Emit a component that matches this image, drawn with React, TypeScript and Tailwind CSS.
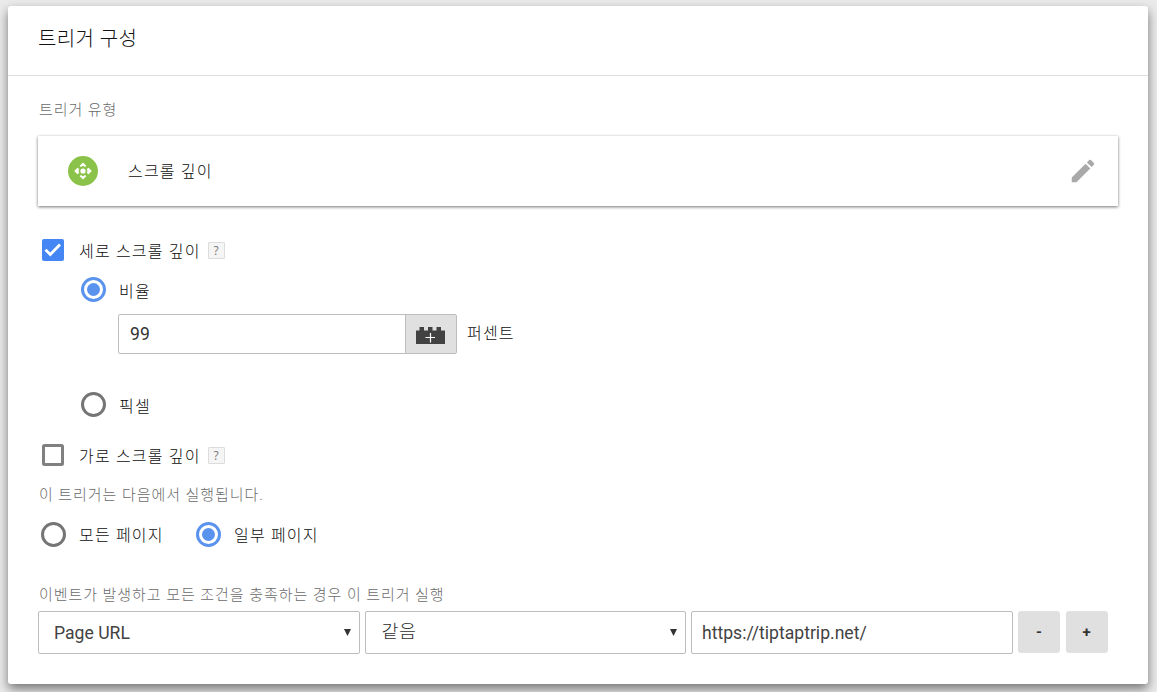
import type { ReactNode } from 'react'

interface LabelProps {
  children: ReactNode
  className?: string
}

function Caption({ children, className = '' }: LabelProps) {
  return (
    <div className={`flex h-8 items-center pt-px pl-px text-[15px] tracking-[0.95px] text-[#6b6b6b] ${className}`}>
      {children}
    </div>
  )
}

function OptionText({ children, className = '' }: LabelProps) {
  return (
    <span className={`text-[16px] tracking-[1.2px] whitespace-nowrap text-[#0c0c0c] ${className}`}>
      {children}
    </span>
  )
}

function Checkbox({ checked = false }: { checked?: boolean }) {
  return (
    <svg className="h-[22px] w-[22px] shrink-0" viewBox="0 0 22 22">
      {checked ? (
        <>
          <rect width="22" height="22" rx="2" fill="#4486f4" />
          <path d="M3.5 10.8l4.8 4.7L18 5.5" fill="none" stroke="#fff" strokeWidth="2.8" />
        </>
      ) : (
        <rect x="1.5" y="1.5" width="19" height="19" rx="1" fill="#fff" stroke="#808080" strokeWidth="3" />
      )}
    </svg>
  )
}

function Radio({ checked = false }: { checked?: boolean }) {
  return (
    <svg className="mb-px h-[25px] w-[25px] shrink-0" viewBox="0 0 25 25">
      <circle cx="12.5" cy="12.5" r="11" fill="#fff" stroke={checked ? '#5a93ee' : '#757575'} strokeWidth="3" />
      {checked && <circle cx="12.5" cy="12.5" r="6.5" fill="#5a93ee" />}
    </svg>
  )
}

function Help() {
  return (
    <span className="mt-px ml-[7px] flex h-[17px] w-[17px] items-center justify-center rounded-[1px] border border-[#dcdcdc] bg-[#f5f5f5] font-['Open_Sans',sans-serif] text-[12px] leading-none font-normal text-[#777]">
      ?
    </span>
  )
}

function ScrollIcon() {
  return (
    <svg className="h-[30px] w-[30px]" viewBox="0 0 30 30">
      <circle cx="15" cy="15" r="15" fill="#8bc34a" />
      <g fill="#fff">
        <circle cx="15" cy="15" r="2.6" />
        <path d="M15 6.5l3.3 3.2-1.2 1.2-2.1-1.100-2.100 1.100-1.200-1.200z" />
        <path d="M15 23.500l3.300-3.200-1.200-1.200-2.100 1.100-2.100-1.100-1.200 1.200z" />
        <path d="M6.200 15l3.200-3.300 1.800 1.200-.7 2.100.7 2.100-1.800 1.200z" />
        <path d="M23.800 15l-3.200-3.300-1.800 1.200.7 2.100-.7 2.100 1.800 1.200z" />
      </g>
    </svg>
  )
}

function PencilIcon() {
  return (
    <svg className="h-[30px] w-[30px]" viewBox="0 0 24 24" fill="#a9a9a9">
      <path d="M3 17.25V21h3.75L17.81 9.94l-3.75-3.75L3 17.25zM20.71 7.04a1 1 0 0 0 0-1.41l-2.34-2.34a1 1 0 0 0-1.41 0l-1.83 1.83 3.75 3.75 1.83-1.83z" />
    </svg>
  )
}

function BrickIcon() {
  return (
    <svg className="h-[17px] w-[29px]" viewBox="0 0 29 17">
      <path d="M0 17V3.5h3.500V0H8v3.500h4V0h4.500v3.500h4V0H25v3.500h4V17z" fill="#424242" />
      <path d="M9.500 10.500h9.500M14.500 6v9.500" stroke="#fff" strokeWidth="1.2" />
    </svg>
  )
}

function Select({ children }: LabelProps) {
  return (
    <button className="flex h-[43px] w-[321.500px] items-center justify-between rounded-[2px] border border-[#bdbdbd] bg-white pr-[8px] pl-[15px] text-[17.6px] text-[#424242]">
      {children}
      <svg className="h-[7px] w-[7px]" viewBox="0 0 7 7">
        <path d="M0 0h7L3.500 7z" fill="#333" />
      </svg>
    </button>
  )
}

export default function App() {
  return (
    <div className="h-[692px] w-[1157px] overflow-hidden bg-[#ebebeb] px-2 pt-1.5 font-[Roboto,'Noto_Sans_CJK_KR',sans-serif] font-light">
      <div className="h-[678px] w-[1140px] rounded-[3px] bg-white shadow-[0_5px_11px_rgba(0,0,0,0.5)]">
        <header className="flex h-[70px] items-center border-b border-[#dedede] px-[30px] pb-[3px]">
          <h1 className="text-[20px] tracking-[0.4px] text-[#111]">트리거 구성</h1>
        </header>

        <main className="px-[30px] pt-[18px]">
          <Caption>트리거 유형</Caption>
          <section className="mt-[10px] flex h-[70px] items-center bg-white pr-5 pl-[30px] shadow-[0_1px_3px_rgba(0,0,0,0.55)]">
            <ScrollIcon />
            <OptionText className="ml-[30px] pt-px">스크롤 깊이</OptionText>
            <button className="ml-auto">
              <PencilIcon />
            </button>
          </section>

          <div className="mt-7 flex h-8 items-center pl-1">
            <Checkbox checked />
            <OptionText className="ml-[15px] pt-[3px]">세로 스크롤 깊이</OptionText>
            <Help />
          </div>
          <div className="mt-2 flex h-8 items-center pl-[43px]">
            <Radio checked />
            <OptionText className="ml-[13px] pt-[3px]">비율</OptionText>
          </div>
          <div className="mt-2 flex h-10 items-center pl-20">
            <input
              className="h-10 w-[288px] rounded-l-[2px] border border-[#bdbdbd] px-[11px] pb-px text-[17.6px] font-normal text-[#333] outline-none"
              defaultValue="99"
            />
            <button className="-ml-px flex h-10 w-[52px] items-center justify-center rounded-r-[2px] border border-[#bdbdbd] bg-[#e0e0e0] pt-[2px] pr-[2px]">
              <BrickIcon />
            </button>
            <OptionText className="ml-[10px] pb-px">퍼센트</OptionText>
          </div>
          <div className="mt-[35px] flex h-8 items-center pl-[43px]">
            <Radio />
            <OptionText className="ml-[13px] pt-[3px]">픽셀</OptionText>
          </div>
          <div className="mt-[18px] flex h-8 items-center pl-1">
            <Checkbox />
            <OptionText className="ml-[15px] pt-[3px]">가로 스크롤 깊이</OptionText>
            <Help />
          </div>

          <Caption className="mt-2">이 트리거는 다음에서 실행됩니다.</Caption>
          <div className="mt-2 flex h-8 items-center pl-[3px]">
            <Radio />
            <OptionText className="ml-[13px] w-[117px] pt-px">모든 페이지</OptionText>
            <Radio checked />
            <OptionText className="ml-[13px] pt-px">일부 페이지</OptionText>
          </div>

          <Caption className="mt-7">이벤트가 발생하고 모든 조건을 충족하는 경우 이 트리거 실행</Caption>
          <div className="flex items-start gap-[5px]">
            <Select>
              <span className="pt-px font-normal">Page URL</span>
            </Select>
            <Select>
              <span className="pt-px pl-px text-[18.5px] tracking-[0.5px] text-[#303030]">같음</span>
            </Select>
            <input
              className="h-[43px] w-[322px] rounded-[2px] border border-[#bdbdbd] px-[10px] text-[17.6px] font-normal text-[#424242] outline-none"
              defaultValue="https://tiptaptrip.net/"
            />
            <button className="h-[42px] w-[42px] rounded-[3px] bg-[#e0e0e0] text-[15px] font-bold text-[#333]">-</button>
            <button className="ml-px h-[42px] w-[42px] rounded-[3px] bg-[#e0e0e0] pr-px text-[15px] font-bold text-[#333]">+</button>
          </div>
        </main>
      </div>
    </div>
  )
}
